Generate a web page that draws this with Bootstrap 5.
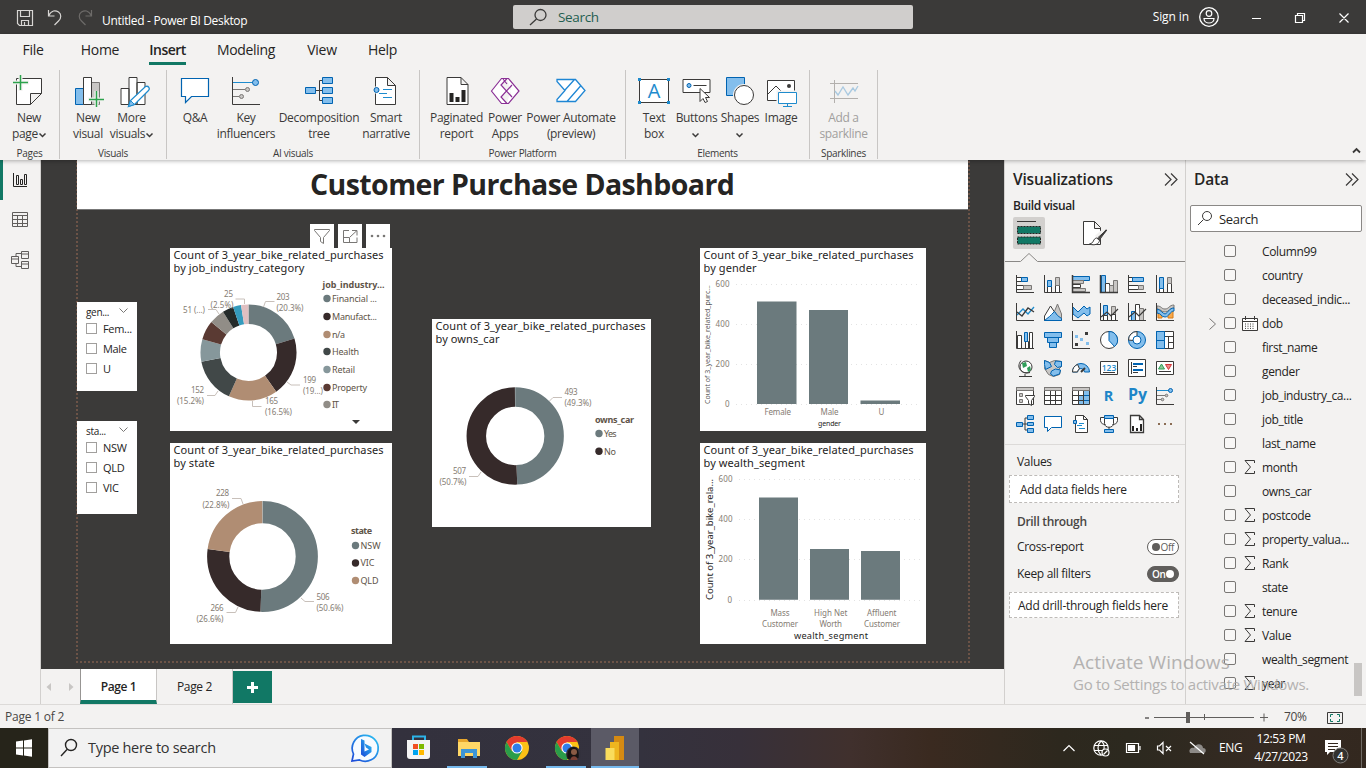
<!DOCTYPE html>
<html lang="en">
<head>
<meta charset="utf-8">
<meta name="viewport" content="width=device-width, initial-scale=1">
<title>Untitled - Power BI Desktop</title>
<link href="https://cdn.jsdelivr.net/npm/bootstrap@5.3.0/dist/css/bootstrap.min.css" rel="stylesheet">
<style>
:root{--ink:#252423;--chrome:#f3f2f1;--dark:#3b3a39;--green:#117865}
body{width:1366px;height:768px;overflow:hidden;font-family:"Open Sans","Noto Sans",sans-serif;font-size:12px;line-height:16px;letter-spacing:-.32px;color:var(--ink);background:var(--chrome)}
svg{display:block;flex:none;overflow:visible}
svg text{letter-spacing:0}
.titlebar{height:34px;background:var(--dark);color:#fff}
.app-search{width:400px;height:24px;background:#d0cecc;border-radius:2px;color:#1f5e50;font-size:13.5px;margin-left:264px}
.ribbon{height:126px;box-shadow:0 1px 4px rgba(0,0,0,.3);z-index:3}
.ribbon-tabs{height:36px;font-size:14px}
.ribbon-tabs a{color:var(--ink);text-decoration:none;height:31px;line-height:31px;text-align:center}
.ribbon-tabs a.on{font-weight:600;border-bottom:3px solid var(--green);letter-spacing:-.55px}
.rgroup{height:89px;border-right:1px solid #c8c6c4}
.ritem{text-align:center;color:#3b3a39;padding-top:5px;white-space:nowrap}
.ritem>svg{margin:0 auto 3px}
.ritem .cv{display:inline-block;overflow:visible;margin:0 0 -1px 1px}
.rlabel{font-size:10px;line-height:12px;text-align:center;color:#3b3a39}
.rail{width:41px;border-right:1px solid #d2d0ce}
.rail>div{height:40px}
.rail .on{border-left:3px solid var(--green);padding-right:3px}
.stage{height:509px;background:var(--dark);overflow:hidden}
.visual{position:absolute;background:#fff;overflow:hidden}
.vtitle{font-family:"Noto Sans",sans-serif;font-size:11px;line-height:13px;height:28px;padding:0 0 0 3.500px;letter-spacing:.09px;white-space:nowrap;color:#252423}
.sheet-guide{position:absolute;left:35px;top:-4px;width:894px;height:507px;border:2px dotted #6c5347}
.banner{position:absolute;left:36px;top:0;width:891px;height:50px;background:#fff;font-weight:700;font-size:28.500px;line-height:48px;letter-spacing:-.58px;padding-left:233px;border-bottom:1px solid #777}
.slicer{width:60px;padding:2px 0 0 9px}
.slicer .hd{height:15px;line-height:16px;font-size:10px;padding-right:9px}
.slicer .opt{height:20px;gap:6px;font-size:11px}
.slicer .bx{width:11px;height:11px;border:1px solid #a19f9d;margin-top:-1px}
.vbtn{width:24px;height:24px;background:#fff}
.sheets{height:35px}
.sheets .tab{width:76px;line-height:35px;text-align:center;border-right:1px solid #c8c6c4}
.sheets .on{background:#fff;border-left:1px solid #979593;border-bottom:4px solid var(--green)}
.sheets .add{width:39px;height:32px;margin-top:2px;background:var(--green)}
.pane{width:181px;border-left:1px solid #d2d0ce}
.pane h2{font-size:15.500px;font-weight:600;line-height:22px;margin:-1px 0 1px;letter-spacing:-.2px}
.viz-grid{display:grid;grid-template-columns:repeat(6,28px);grid-auto-rows:28px;place-items:center;margin:9px 0 0 6px}
.well{background:#fff;border:1px dashed #bebbb8;width:170px;margin-left:4px}
.tgl{width:32px;height:16px;border:1px solid #605e5c;border-radius:8px;font-size:10px;background:#fff;color:#605e5c;padding:0 4px;margin-right:6px}
.tgl i{width:8px;height:8px;border-radius:4px;background:#605e5c}
.tgl.yes{background:#605e5c;color:#fff;font-weight:600}.tgl.yes i{background:#fff}
.data-search{width:172px;height:27px;border:1px solid #8a8886;border-radius:2px;background:#fff;font-size:13px;margin:14px 0 0 4px}
.field{height:24px;padding-left:23px;letter-spacing:-.36px}
.field .ex{width:15px}.field .bx{width:12px;height:12px;border:1px solid #797775;border-radius:2px;background:#f8f7f6;margin-top:-2px}
.field .ty{width:26px;padding-left:7px}
.thumb{position:absolute;left:1354px;top:663px;width:8px;height:33px;background:#c8c6c4}
.status{height:24px;border-top:1px solid #dcdad8;color:#484644}
.taskbar{height:40px;color:#fff;background:linear-gradient(90deg,#26241a 0,#26241a 48px,#33313d 392px,#34323e 640px,#37303a 740px,#40302d 850px,#3a2a20 930px,#2d281e 1060px,#2c291f 1130px,#352a22 1260px,#33281f 100%)}
.tb-search{width:344px;height:40px;background:#f2f2f2;border:1px solid #c4c2c0;color:#333;font-size:14.500px;letter-spacing:-.3px;margin-right:1px}
.app{width:49.500px;height:40px}
.app.run{background:linear-gradient(#76b9ed,#76b9ed) center bottom/40px 2px no-repeat}
.app.cur{width:48px;background:linear-gradient(#76b9ed,#76b9ed) center bottom/100% 2px no-repeat #5b5a66}
.watermark{position:absolute;left:1073px;top:650px;color:#a9a7a6;opacity:.85;font-size:15px;line-height:21px;z-index:5;letter-spacing:-.28px;white-space:nowrap}
.watermark div:first-child{font-size:19px;line-height:24px;letter-spacing:.05px}
.k{fill:#fff;stroke:#3b3a39}.n{fill:none;stroke:#3b3a39}.b{fill:#83beec;stroke:#0063b1}.g{fill:#c8c6c4;stroke:#797775}
.bl{fill:none;stroke:#1e8bcd}.gl{fill:none;stroke:#797775}
.lb{font:8px "Noto Sans",sans-serif;fill:#857c73}.lg{font:9px "Noto Sans",sans-serif;fill:#605448}
.lead-line{fill:none;stroke:#c8c0ba}
.donut circle{fill:none}
.gridl{stroke:#e3e3e3;stroke-dasharray:1 4}
.axt{font:7.500px "Noto Sans",sans-serif;fill:#252423}
</style>
</head>
<body class="d-flex flex-column position-relative">

<header class="titlebar d-flex align-items-center flex-shrink-0">
  <svg width="102" height="34" fill="none" stroke="#d8d6d4" stroke-width="1.2"><path d="M17.500 10.500h15v15h-13l-2-2zM20.500 10.500v6h9v-6M21.500 25.500v-5h7v5M24.500 25v-3"/><path d="M48.500 10v6h6M48.500 16c3-6 7-6 10-4s3 6 0 9l-4 4"/><path stroke="#6d6b69" d="M91.500 10v6h-6M91.500 16c-3-6-7-6-10-4s-3 6 0 9l4 4"/></svg>
  <span class="text-nowrap pt-2" style="width:147px">Untitled - Power BI Desktop</span>
  <div class="app-search d-flex align-items-center">
    <svg width="45" height="24" fill="none" stroke="#3b3a39" stroke-width="1.3"><circle cx="27.500" cy="10" r="5.500"/><path d="M23.500 14L17 20"/></svg><span>Search</span>
  </div>
  <span class="ms-auto" style="padding-right:9px;letter-spacing:-.1px">Sign in</span>
  <svg width="168" height="34" fill="none" stroke="#fff"><circle cx="11" cy="17" r="9.300" stroke-width="1.300"/><circle cx="11" cy="13.500" r="2.800" stroke-width="1.200"/><path d="M6 18.500h10c0 6-10 6-10 0z" stroke-width="1.200"/><path d="M54 18.500h9M97.500 15.500h7v7h-7zM99.500 15.500v-2h7v7h-2M141.500 13.500l9 9M150.500 13.500l-9 9" stroke-width="1.200"/></svg>
</header>

<section class="ribbon flex-shrink-0 position-relative">
  <nav class="ribbon-tabs d-flex">
    <a href="#" style="width:66px">File</a><a href="#" style="width:68px">Home</a><a href="#" class="on" style="width:37px;margin-left:15px">Insert</a><a href="#" style="width:90px;margin-left:15px">Modeling</a><a href="#" style="width:62px">View</a><a href="#" style="width:59px">Help</a>
  </nav>
  <div class="d-flex">
    <div class="rgroup d-flex flex-column justify-content-between" style="width:60px">
      <div class="d-flex"><div class="ritem" style="width:58px"><svg width="32" height="32" viewBox="13 75 32 32"><path class="k" d="M16.500 78.500h25v15l-11 11h-14zM41.500 93.500h-11v11"/><path stroke="#f3f2f1" stroke-width="4" d="M20.500 75v16M13 82.500h16"/><path stroke="#2ca24c" stroke-width="1.500" d="M20.500 75v15M13 82.500h15"/></svg>New<br>page<svg class="cv" width="7" height="5"><path class="n" stroke-width="1.500" d="M.5.500l3 3 3-3"/></svg></div></div>
      <div class="rlabel">Pages</div>
    </div>
    <div class="rgroup d-flex flex-column justify-content-between" style="width:107px">
      <div class="d-flex" style="padding-left:7px"><div class="ritem" style="width:42px"><svg width="32" height="32" viewBox="72 75 32 32"><path class="b" d="M75.500 88.500h8v16h-8z"/><path class="g" d="M91.500 82.500h8v22h-8z"/><path class="k" d="M83.500 77.500h8v27h-8z"/><path stroke="#f3f2f1" stroke-width="4" d="M96.500 91v16M88 99.500h16"/><path stroke="#2ca24c" stroke-width="1.500" d="M96.500 91v16M89 99.500h15"/></svg>New<br>visual</div><div class="ritem" style="width:45px"><svg width="32" height="32" viewBox="115.500 75 32 32"><path class="k" d="M120.500 88.500h8v16h-8zM136.500 82.500h8v22h-8zM128.500 77.500h8v27h-8z"/><path d="M128 106.500l2-6 15-14c3-1 5 2 3 4l-14 14z" fill="#fff" stroke="#1e8bcd" stroke-width="1.300"/><path fill="#83beec" stroke="#1e8bcd" d="M128 106.500l2-6 4 4z"/></svg>More<br>visuals<svg class="cv" width="7" height="5"><path class="n" stroke-width="1.500" d="M.5.500l3 3 3-3"/></svg></div></div>
      <div class="rlabel">Visuals</div>
    </div>
    <div class="rgroup d-flex flex-column justify-content-between" style="width:253px">
      <div class="d-flex" style="padding-left:7px"><div class="ritem" style="width:42px"><svg width="32" height="32" viewBox="179 75 32 32"><path fill="#fff" stroke="#0063b1" stroke-width="1.200" d="M181.500 78.500h27v18h-17l-6 6v-6h-4z"/></svg>Q&amp;A</div><div class="ritem" style="width:60px"><svg width="32" height="32" viewBox="230 75 32 32"><path class="n" d="M232.500 77v27.500h27.500"/><path class="bl" d="M233 82.500h20"/><path class="gl" d="M233 89.500h12M233 96.500h6"/><circle class="b" cx="255.500" cy="82.500" r="3"/><circle class="g" cx="247.500" cy="89.500" r="2"/><circle class="g" cx="241.500" cy="96.500" r="2"/></svg>Key<br>influencers</div><div class="ritem" style="width:86px"><svg width="32" height="32" viewBox="303 75 32 32"><path class="n" d="M315 90.500h8M323 80.500h-3.500v20h3.500"/><path class="b" d="M305.500 87.500h10v6h-10zM322.500 77.500h10v6h-10zM322.500 87.500h10v6h-10zM322.500 97.500h10v6h-10z"/></svg>Decomposition<br>tree</div><div class="ritem" style="width:48px"><svg width="32" height="32" viewBox="370 75 32 32"><path class="k" d="M375.500 77.500h12l8 8v19h-20zM387.500 77.500v8h8"/><path stroke="#f3f2f1" stroke-width="7" d="M374 90h3"/><circle class="b" cx="376.500" cy="90" r="2.500"/><path class="bl" d="M383 89.500h9M379 93.500h8M383 97.500h9"/></svg>Smart<br>narrative</div></div>
      <div class="rlabel">AI visuals</div>
    </div>
    <div class="rgroup d-flex flex-column justify-content-between" style="width:206px">
      <div class="d-flex" style="padding-left:9px"><div class="ritem" style="width:55px"><svg width="32" height="32" viewBox="440.500 75 32 32"><path class="k" d="M446.500 77.500h14l7 7v20h-21zM460.500 77.500v7h7"/><path fill="#252423" d="M449 93h4v9h-4zM455 97h4v5h-4zM461 90h4v12h-4z"/></svg>Paginated<br>report</div><div class="ritem" style="width:42px"><svg width="32" height="32" viewBox="489 75 32 32"><path fill="#fff" stroke="#8a2f95" stroke-width="1.200" d="M491.500 91l10-12.500h7l10.500 12.500-10.500 12.500h-7zM507 78.500l-6 6.500 11 12M512 85l-11 12 6 6.500M503 79l4 5"/></svg>Power<br>Apps</div><div class="ritem" style="width:90px"><svg width="32" height="32" viewBox="555 75 32 32"><path fill="#fff" stroke="#1e86d4" stroke-width="1.300" d="M557 79.500h18.500l9.500 11-9.500 11h-18.500v-2l8-9-8-9zM565 90l9.500-10.500M567 101.500l14-16"/></svg>Power Automate<br>(preview)</div></div>
      <div class="rlabel">Power Platform</div>
    </div>
    <div class="rgroup d-flex flex-column justify-content-between" style="width:184px">
      <div class="d-flex" style="padding-left:7px"><div class="ritem" style="width:42px"><svg width="32" height="32" viewBox="638 75 32 32"><path class="k" d="M639.500 79.500h29v23h-29z"/><path fill="#1e8bcd" d="M638 78h3v3h-3zM667 78h3v3h-3zM638 101h3v3h-3zM667 101h3v3h-3z"/><text x="654" y="98" text-anchor="middle" font-size="20" fill="#1e8bcd">A</text></svg>Text<br>box</div><div class="ritem" style="width:43px"><svg width="32" height="32" viewBox="680.500 75 32 32"><path class="k" d="M682.500 79.500h27v13h-27z"/><circle class="b" cx="688.500" cy="85.500" r="2"/><path class="n" d="M693 85.500h13"/><path class="k" d="M699.500 88.500v13l3-3 2 4 2.500-1-2-4h4z"/></svg>Buttons<br><svg class="cv" style="margin-left:-2px" width="7" height="5"><path class="n" stroke-width="1.500" d="M.5.500l3 3 3-3"/></svg></div><div class="ritem" style="width:44px"><svg width="32" height="32" viewBox="724 75 32 32"><path class="b" d="M726.500 77.500h18v18h-18z"/><circle cx="744" cy="95" r="11" fill="#f3f2f1"/><circle class="k" cx="744" cy="95" r="9.500"/></svg>Shapes<br><svg class="cv" style="margin-left:-2px" width="7" height="5"><path class="n" stroke-width="1.500" d="M.5.500l3 3 3-3"/></svg></div><div class="ritem" style="width:38px"><svg width="32" height="32" viewBox="765 75 32 32"><path class="k" d="M767.500 80.500h27v20h-27z"/><path class="n" d="M768 94l8-8 7 7"/><circle cx="789" cy="86" r="2" fill="#3b3a39"/><path fill="#fff" stroke="#f3f2f1" stroke-width="4" d="M778.500 92.500h18v11h-18z"/><path fill="#fff" stroke="#1e8bcd" d="M778.500 92.500h18v11h-18zM787.500 104v2.500M783 106.500h9"/></svg>Image</div></div>
      <div class="rlabel">Elements</div>
    </div>
    <div class="rgroup d-flex flex-column justify-content-between" style="width:68px">
      <div class="d-flex justify-content-center"><div class="ritem" style="width:50px;color:#a19f9d"><svg width="32" height="32" viewBox="827 75 32 32" fill="none" stroke="#b3b0ad"><path d="M829 83.500h28M829 98.500h28M833.500 80v23"/><path stroke="#a9c9e0" stroke-width="1.300" d="M834 91l3 4 5-8 5 8 5-7 2 3 3-5"/></svg>Add a<br>sparkline</div></div>
      <div class="rlabel">Sparklines</div>
    </div>
    <svg class="ms-auto me-1 mt-auto" style="margin-bottom:5px" width="11" height="7"><path class="n" stroke-width="1.800" d="M2 5.500l3.500-3.500 3.500 3.500"/></svg>
  </div>
</section>

<main class="d-flex flex-shrink-0" style="height:544px">
  <aside class="rail flex-shrink-0">
    <div class="on d-flex align-items-center justify-content-center"><svg width="14" height="14" fill="none" stroke="#252423"><path d="M.5 0v13.500h13.500M3.500 11.500v-9h2v9zM7.500 11.500v-5h2v5zM11.500 11.500v-10h2v10z"/></svg></div>
    <div class="d-flex align-items-center justify-content-center"><svg width="16" height="16" fill="none" stroke="#605e5c"><path d="M.5.500h15v14h-15zM0 3.500h16M0 7.500h16M0 11.500h16M5.500 3v12M10.500 3v12"/></svg></div>
    <div class="d-flex align-items-center justify-content-center"><svg width="18" height="18" fill="none" stroke="#605e5c"><path d="M.5 5.500h7v7h-7zM.5 8h7M10.500.500h7v7h-7zM10.500 3h7M10.500 10.500h7v7h-7zM10.500 13h7M5 5.500v-3h5.500M5 12.500v3h5.500"/></svg></div>
  </aside>

  <div class="d-flex flex-column flex-grow-1">
    <div class="stage position-relative">
      <div class="sheet-guide"></div>
      <div class="banner">Customer Purchase Dashboard</div>

      <div class="position-absolute d-flex" style="left:269px;top:64px;gap:4px">
        <div class="vbtn"><svg width="24" height="24" fill="none" stroke="#797775"><path d="M4.500 5.500h15v1l-6 7v6l-3-2v-4l-6-7z"/></svg></div>
        <div class="vbtn"><svg width="24" height="24" fill="none" stroke="#797775"><path d="M11 6.500h-5.500v12h13.500v-5M5.500 13.500h6v5M12 13l7-6.500M14 6.500h5v5"/></svg></div>
        <div class="vbtn"><svg width="24" height="24" fill="#797775"><circle cx="6" cy="12" r="1.300"/><circle cx="12" cy="12" r="1.300"/><circle cx="18" cy="12" r="1.300"/></svg></div>
      </div>

      <section class="visual" style="left:129px;top:88px;width:221.500px;height:183px">
        <div class="vtitle">Count of 3_year_bike_related_purchases<br>by job_industry_category</div>
        <svg width="221" height="155" viewBox="170 276 221 155">
          <g class="donut" transform="rotate(-90 248.500 352.500)" stroke-width="19.500">
            <circle cx="248.500" cy="352.500" r="38.300" pathLength="1000" stroke="#6b7a7d" stroke-dasharray="203 2000"/>
            <circle cx="248.500" cy="352.500" r="38.300" pathLength="1000" stroke="#362a2a" stroke-dasharray="199 2000" stroke-dashoffset="-203"/>
            <circle cx="248.500" cy="352.500" r="38.300" pathLength="1000" stroke="#b08d73" stroke-dasharray="165 2000" stroke-dashoffset="-402"/>
            <circle cx="248.500" cy="352.500" r="38.300" pathLength="1000" stroke="#414848" stroke-dasharray="152 2000" stroke-dashoffset="-567"/>
            <circle cx="248.500" cy="352.500" r="38.300" pathLength="1000" stroke="#86979b" stroke-dasharray="76 2000" stroke-dashoffset="-719"/>
            <circle cx="248.500" cy="352.500" r="38.300" pathLength="1000" stroke="#5a3a33" stroke-dasharray="64 2000" stroke-dashoffset="-795"/>
            <circle cx="248.500" cy="352.500" r="38.300" pathLength="1000" stroke="#918d87" stroke-dasharray="52 2000" stroke-dashoffset="-859"/>
            <circle cx="248.500" cy="352.500" r="38.300" pathLength="1000" stroke="#242a29" stroke-dasharray="37 2000" stroke-dashoffset="-911"/>
            <circle cx="248.500" cy="352.500" r="38.300" pathLength="1000" stroke="#349bbd" stroke-dasharray="27 2000" stroke-dashoffset="-948"/>
            <circle cx="248.500" cy="352.500" r="38.300" pathLength="1000" stroke="#dfbfc1" stroke-dasharray="24.500 2000" stroke-dashoffset="-975"/>
          </g>
          <path class="lead-line" d="M263.500 307l2-5.500h9M244.500 304v-5h-9M219 314l-3-4.500h-8M287 382l4 3h9M252.500 401v5.500h9M218 391l-3 4.500h-8"/>
          <g class="lb"><text x="276.500" y="300" textLength="13">203</text><text x="276.500" y="311" textLength="27">(20.3%)</text><text x="224" y="297" textLength="9">25</text><text x="210.500" y="308" textLength="23">(2.5%)</text><text x="183" y="313" textLength="22">51 (...)</text><text x="303" y="383" textLength="13">199</text><text x="303" y="394" textLength="20">(19...)</text><text x="265" y="404" textLength="13">165</text><text x="265" y="415" textLength="27">(16.5%)</text><text x="191" y="393" textLength="13">152</text><text x="177" y="404" textLength="27">(15.2%)</text></g>
          <text class="lg" style="font-weight:700" x="322.500" y="288" textLength="62">job_industry...</text>
          <g class="lg"><text x="332" y="302" textLength="45">Financial ...</text><text x="332" y="320" textLength="45">Manufact...</text><text x="332" y="338" textLength="13">n/a</text><text x="332" y="355" textLength="27">Health</text><text x="332" y="373" textLength="23">Retail</text><text x="332" y="391" textLength="35">Property</text><text x="332" y="408" textLength="7">IT</text></g>
          <circle cx="327" cy="298.500" r="3.700" fill="#6b7a7d"/><circle cx="327" cy="316.500" r="3.700" fill="#362a2a"/><circle cx="327" cy="334.500" r="3.700" fill="#b08d73"/><circle cx="327" cy="351.500" r="3.700" fill="#414848"/><circle cx="327" cy="369.500" r="3.700" fill="#86979b"/><circle cx="327" cy="387.500" r="3.700" fill="#5a3a33"/><circle cx="327" cy="404.500" r="3.700" fill="#918d87"/>
          <path d="M352 420h8l-4 4z" fill="#3b3a39"/>
        </svg>
      </section>

      <section class="visual" style="left:129px;top:283px;width:221.500px;height:201px">
        <div class="vtitle">Count of 3_year_bike_related_purchases<br>by state</div>
        <svg width="221" height="173" viewBox="170 471 221 173">
          <g class="donut" transform="rotate(-90 262.500 556.500)" stroke-width="22.200">
            <circle cx="262.500" cy="556.500" r="44.300" pathLength="1000" stroke="#6b7a7d" stroke-dasharray="506 2000"/>
            <circle cx="262.500" cy="556.500" r="44.300" pathLength="1000" stroke="#362a2a" stroke-dasharray="266 2000" stroke-dashoffset="-506"/>
            <circle cx="262.500" cy="556.500" r="44.300" pathLength="1000" stroke="#b08d73" stroke-dasharray="227 2000" stroke-dashoffset="-772"/>
          </g>
          <path class="lead-line" d="M243 504l-2-5.500h-9M301 598l4 3.500h9M238 607l-2.500 5.500h-9"/>
          <g class="lb"><text x="216" y="496" textLength="13">228</text><text x="202.500" y="508" textLength="27">(22.8%)</text><text x="316.500" y="600" textLength="13">506</text><text x="316.500" y="611" textLength="27">(50.6%)</text><text x="210.500" y="611" textLength="13">266</text><text x="196.500" y="622" textLength="27">(26.6%)</text></g>
          <text class="lg" style="font-weight:700" x="351" y="534" textLength="21">state</text>
          <g class="lg"><text x="360.500" y="549" textLength="20">NSW</text><text x="360.500" y="566" textLength="14">VIC</text><text x="360.500" y="584" textLength="18">QLD</text></g>
          <circle cx="355.500" cy="545.500" r="3.700" fill="#6b7a7d"/><circle cx="355.500" cy="563" r="3.700" fill="#362a2a"/><circle cx="355.500" cy="580.500" r="3.700" fill="#b08d73"/>
        </svg>
      </section>

      <section class="visual" style="left:391px;top:159px;width:219px;height:208px">
        <div class="vtitle">Count of 3_year_bike_related_purchases<br>by owns_car</div>
        <svg width="219" height="180" viewBox="432 347 219 180">
          <g class="donut" transform="rotate(-90 515.200 436)" stroke-width="19.500">
            <circle cx="515.200" cy="436" r="38.900" pathLength="1000" stroke="#6b7a7d" stroke-dasharray="493 2000"/>
            <circle cx="515.200" cy="436" r="38.900" pathLength="1000" stroke="#362a2a" stroke-dasharray="506 2000" stroke-dashoffset="-493"/>
          </g>
          <path class="lead-line" d="M549.500 401l3.500-3.500h9M481 472l-3 4.500h-9"/>
          <g class="lb"><text x="564.500" y="395" textLength="13">493</text><text x="564.500" y="406" textLength="27">(49.3%)</text><text x="453" y="474" textLength="13">507</text><text x="439.500" y="485" textLength="27">(50.7%)</text></g>
          <text class="lg" style="font-weight:700" x="595" y="423" textLength="39">owns_car</text>
          <g class="lg"><text x="604" y="437" textLength="12.500">Yes</text><text x="604" y="455" textLength="12">No</text></g>
          <circle cx="599" cy="433.500" r="3.700" fill="#6b7a7d"/><circle cx="599" cy="451.300" r="3.700" fill="#362a2a"/>
        </svg>
      </section>

      <section class="visual" style="left:659px;top:88px;width:226px;height:183px">
        <div class="vtitle">Count of 3_year_bike_related_purchases<br>by gender</div>
        <svg width="226" height="155" viewBox="700 276 226 155">
          <path class="gridl" d="M736 284.500h185M736 324.500h185M736 364.500h185M736 404.500h185"/>
          <path fill="#6b7a7d" d="M757 301.500h39.500v102.500h-39.500zM809 310h39v94h-39zM860.500 400.500h39.500v3.500h-39.500z"/>
          <g class="lb"><text x="715.500" y="287" textLength="14">600</text><text x="715.500" y="327" textLength="14">400</text><text x="715.500" y="367" textLength="14">200</text><text x="725" y="407">0</text><text x="764.500" y="415" textLength="26.500">Female</text><text x="820.500" y="415" textLength="18">Male</text><text x="878.500" y="415">U</text></g>
          <text class="axt" style="font-size:7px" x="818" y="426" textLength="23">gender</text>
          <text class="axt" style="font-size:7px" fill-opacity=".8" transform="translate(710 404) rotate(-90)" textLength="119">Count of 3_year_bike_related_purc...</text>
        </svg>
      </section>

      <section class="visual" style="left:659px;top:283px;width:226px;height:201px">
        <div class="vtitle">Count of 3_year_bike_related_purchases<br>by wealth_segment</div>
        <svg width="226" height="173" viewBox="700 471 226 173">
          <path class="gridl" d="M739 479.500h182M739 519.500h182M739 559.500h182M739 600.500h182"/>
          <path fill="#6b7a7d" d="M759 497.500h39v102.300h-39zM810 549h39v50.800h-39zM861 551h39v48.800h-39z"/>
          <g class="lb"><text x="718.500" y="482" textLength="14">600</text><text x="718.500" y="522" textLength="14">400</text><text x="718.500" y="562" textLength="14">200</text><text x="727.500" y="603">0</text><text x="770.500" y="616" textLength="19">Mass</text><text x="762" y="627" textLength="36">Customer</text><text x="814" y="616" textLength="33.500">High Net</text><text x="819.500" y="627" textLength="22.500">Worth</text><text x="867" y="616" textLength="29.500">Affluent</text><text x="864" y="627" textLength="36">Customer</text></g>
          <text class="axt" style="font-size:9.200px" x="794" y="639" textLength="74">wealth_segment</text>
          <text class="axt" style="font-size:9.500px" transform="translate(713 600) rotate(-90)" textLength="121">Count of 3_year_bike_rela...</text>
        </svg>
      </section>

      <section class="visual slicer" style="left:36px;top:142px;height:89px">
        <div class="hd d-flex justify-content-between align-items-center">gen...<svg width="9" height="5" style="margin-top:-3px"><path class="gl" d="M.5.500l4 4 4-4"/></svg></div>
        <div class="opt d-flex align-items-center"><i class="bx"></i>Fem...</div><div class="opt d-flex align-items-center"><i class="bx"></i>Male</div><div class="opt d-flex align-items-center"><i class="bx"></i>U</div>
      </section>
      <section class="visual slicer" style="left:36px;top:261px;height:93px">
        <div class="hd d-flex justify-content-between align-items-center">sta...<svg width="9" height="5" style="margin-top:-3px"><path class="gl" d="M.5.500l4 4 4-4"/></svg></div>
        <div class="opt d-flex align-items-center"><i class="bx"></i>NSW</div><div class="opt d-flex align-items-center"><i class="bx"></i>QLD</div><div class="opt d-flex align-items-center"><i class="bx"></i>VIC</div>
      </section>
    </div>

    <div class="sheets d-flex">
      <svg width="39" height="35" fill="#c8c6c4"><path d="M10 14v8l-4.500-4zM28 14v8l4.500-4z"/></svg>
      <div class="tab on fw-semibold" style="width:77px;letter-spacing:-.4px">Page 1</div><div class="tab">Page 2</div>
      <div class="add"><svg width="39" height="32"><path stroke="#fff" stroke-width="3" d="M14 16.500h11M19.500 11v11"/></svg></div>
    </div>
  </div>

  <aside class="pane flex-shrink-0">
    <div class="d-flex justify-content-between align-items-center" style="padding:9px 8px 0 8px"><h2>Visualizations</h2><svg width="13" height="13" style="margin-top:-2px"><path class="n" stroke-width="1.200" d="M1 .5l6 6-6 6M7 .5l6 6-6 6"/></svg></div>
    <div class="fw-semibold" style="padding:7px 0 0 8px;letter-spacing:-.38px">Build visual</div>
    <svg width="180" height="58" viewBox="1005 214 180 58"><rect x="1013" y="217" width="32" height="32" rx="2" fill="#d2d0ce"/><path class="n" d="M1017 221.500h19"/><path d="M1017.500 226.500h23v7h-23zM1017.500 237h23v7h-23z" fill="#117865" stroke="#252423" stroke-dasharray="2 1"/><path class="k" d="M1083.500 221.500h11l6 6v17h-17zM1094.500 221.500v7h6"/><path d="M1107 229l-10 9" stroke="#f3f2f1" stroke-width="6"/><path class="k" d="M1106.500 230l-9 8 2 2zM1096.500 238c-4 1-2 5-7 6 5 2 10 0 10-4z"/><path class="n" stroke-width="1.600" d="M1106.500 230l-8 9"/><path fill="none" stroke="#8a8886" d="M1005 261.500h15.500l8.500-8 8.500 8h147.500"/></svg>

    <div class="viz-grid" style="margin-top:-2px">
      <svg width="18" height="18"><path class="k" d="M.5 2.500h6v4h-6zM.5 10.500h8v4h-8z"/><path class="b" d="M5.500 2.500h6v4h-6z"/><path class="g" d="M7.500 10.500h8v4h-8z"/><path class="n" d="M.5 0v17.500h17.500"/></svg>
      <svg width="18" height="18"><path class="k" d="M3.500 11.500h4v6h-4zM11.500 9.500h4v8h-4z"/><path class="b" d="M3.500 5.500h4v6h-4z"/><path class="g" d="M11.500 2.500h4v8h-4z"/><path class="n" d="M.5 0v17.500h17.500"/></svg>
      <svg width="18" height="18"><path class="b" d="M.5 1.500h17v4h-17z"/><path class="g" d="M.5 5.500h11v3h-11zM.5 13.500h13v3h-13z"/><path class="k" d="M.5 9.500h8v3h-8z"/><path class="n" stroke-width="1.500" d="M.5 0v17.500h17.500"/></svg>
      <svg width="18" height="18"><path class="b" d="M1.500.500h4v17h-4z"/><path class="k" d="M5.500 8.500h4v9h-4z"/><path class="g" d="M9.500 10.500h4v7h-4zM13.500 5.500h4v12h-4z"/><path class="n" stroke-width="1.500" d="M.5 0v17.500h17.500"/></svg>
      <svg width="18" height="18"><path class="k" d="M.5 2.500h5v4h-5zM.5 10.500h10v4h-10z"/><path class="b" d="M4.500 2.500h11v4h-11z"/><path class="g" d="M10.500 10.500h5v4h-5z"/><path class="n" d="M.5 0v17.500h17.500"/></svg>
      <svg width="18" height="18"><path class="k" d="M3.500 12.500h4v5h-4zM11.500 8.500h4v9h-4z"/><path class="b" d="M3.500 2.500h4v11h-4z"/><path class="g" d="M11.500 2.500h4v6h-4z"/><path class="n" d="M.5 0v17.500h17.500"/></svg>

      <svg width="18" height="18"><path class="bl" stroke-width="1.300" d="M1 12l6-6 5 5 6-7"/><path class="n" stroke-width="1.300" d="M1 9l5 4 6-8 6 4"/><path class="n" d="M.5 0v17.500h17.500"/></svg>
      <svg width="18" height="18"><path class="g" d="M8.500 13l5-12 4 10v6.500h-9z"/><path class="k" d="M.5 13l6-10 6 9v5.500h-12z"/><path class="b" d="M.5 17.500l5-4 2-2 3-3 3 4 4 3v2z"/></svg>
      <svg width="18" height="18"><path class="b" d="M1 4l5 5 6-6 3 3 3-2v7l-3 2-3-3-6 5-5-4z"/><path class="n" d="M.5 0v17.500h17.500"/></svg>
      <svg width="18" height="18"><path class="b" d="M3.500 2.500h4v10h-4z"/><path class="g" d="M11.500 3.500h4v10h-4z"/><path class="k" d="M3.500 12.500h4v5h-4zM11.500 11.500h4v6h-4z"/><path class="n" stroke-width="1.200" d="M1 14l6-5 4 4 7-7"/><path class="n" d="M.5 0v17.500h17.500"/></svg>
      <svg width="18" height="18"><path class="b" d="M3.500 8.500h4v9h-4z"/><path class="k" d="M7.500 1.500h4v16h-4z"/><path class="g" d="M11.500 5.500h4v12h-4z"/><path class="n" stroke-width="1.200" d="M1 14l6-5 4 4 7-7"/><path class="n" d="M.5 0v17.500h17.500"/></svg>
      <svg width="18" height="18"><path fill="#f7a94c" stroke="#d87a16" d="M2 8h4v7h-4zM12 8h5v7h-5z"/><path class="g" d="M1 3c5 0 4 3 8 3s4-4 9-4v3c-4 0-5 4-9 4s-4-3-8-3z"/><path class="b" d="M1 6c4 1 5 4 8 5 3-1 4-6 9-6v3c-4 0-5 6-9 6s-4-4-8-4z"/><path class="n" d="M.5 0v17.500h17.500"/></svg>

      <svg width="18" height="18"><path class="k" d="M1.500 4.500h4v13h-4zM9.500 10.500h3v7h-3zM13.500 1.500h3v16h-3z"/><path class="b" d="M8.500 1.500h3v9h-3z"/><path class="n" d="M.5 0v17.500h17.500"/></svg>
      <svg width="18" height="18"><path class="b" d="M.5 1.500h17v5h-17zM3.500 6.500h11v5h-11zM5.500 11.500h7v5h-7z"/></svg>
      <svg width="18" height="18"><path fill="#83beec" d="M3 4h3v3h-3zM8 7h3v3h-3zM14 11h3v3h-3z"/><path fill="#3b3a39" d="M13 1h3v3h-3zM3 12h3v3h-3z"/><path class="n" d="M.5 0v17.500h17.500"/></svg>
      <svg width="18" height="18"><circle class="k" cx="9" cy="9" r="8.500"/><path class="b" d="M9 .5a8.500 8.500 0 0 1 5.500 15l-5.500-6z"/></svg>
      <svg width="18" height="18"><circle class="b" cx="9" cy="9" r="8.500"/><path class="k" d="M.5 9a8.500 8.500 0 0 1 8.500-8.500v5a4 4 0 0 0-4 4z"/><circle cx="9" cy="9" r="4" fill="#fff" stroke="#0063b1"/></svg>
      <svg width="18" height="18"><path class="k" d="M.5.500h17v17h-17zM8.500 5.500h9M12.500 5.500v12M12.500 11.500h5"/><path class="b" d="M.5.500h8v9h-8zM.5 9.500h8v8h-8z"/></svg>

      <svg width="18" height="18"><circle class="k" cx="10" cy="8" r="6"/><path fill="#2f9e58" d="M6 4l4-1 1 4-4 2zM11 9l3-2 1 4-3 2z"/><path class="n" d="M5 1.500c-6 8 2 14 9 12M9 15v2M3 17.500h13"/></svg>
      <svg width="18" height="18"><path class="g" d="M.5 1.500l5 2 5-2 7 1v5l-3 3 2 1-1 4-6 2-5-2-4-6 1-4z"/><path class="b" d="M.5 1.500l5 2 2 4-6 3-1-5zM11.500 2l6 .500v5l-4 1-3-3zM7.500 12l4-2 5 1-1 4-6 2-3-2z"/></svg>
      <svg width="18" height="18"><path class="b" d="M.5 13a8.500 8.500 0 0 1 17 0h-5a3.500 3.500 0 0 0-7 0z"/><path class="k" d="M.5 13a8.500 8.500 0 0 1 5-7.600l2 4.500a3.500 3.500 0 0 0-2 3z"/><path class="n" stroke-width="2" d="M9 13l4-4"/></svg>
      <svg width="18" height="18"><path class="k" d="M.5 2.500h17v13h-17z"/><path class="n" d="M3 13.500h12"/><text x="9" y="11.500" text-anchor="middle" font-size="8.500" font-weight="600" fill="#1e8bcd">123</text></svg>
      <svg width="18" height="18"><path class="k" d="M.5.500h17v17h-17z"/><path class="n" d="M3.500 3v12M5 7.500h4M5 13.500h5"/><path stroke="#0063b1" stroke-width="2" d="M5 5h10M5 11h10"/></svg>
      <svg width="18" height="18"><path class="k" d="M.5 2.500h17v13h-17z"/><path fill="#8bc796" stroke="#2f9e58" d="M2.500 10l3-5 3 5z"/><path fill="#ee8a8a" stroke="#d13438" d="M9.500 5.500h6l-3 5z"/><path class="n" d="M3 12.500h12"/></svg>

      <svg width="18" height="18"><path class="k" d="M.5.500h17v17h-17z"/><path class="g" d="M.5.500h17v3h-17zM3.500 6.500h3v3h-3zM3.500 12.500h3v3h-3z"/><path class="k" d="M9.500 8.500h9v1l-3 4v5l-3-2v-3l-3-4z"/></svg>
      <svg width="18" height="18"><path class="k" d="M.5.500h17v17h-17zM.5 8.500h17M.5 13.500h17M6.500 4v13M11.500 4v13"/><path class="g" d="M.5.500h17v3h-17z"/></svg>
      <svg width="18" height="18"><path class="k" d="M.5.500h17v17h-17z"/><path class="g" d="M.5.500h17v3h-17z"/><path fill="#83beec" d="M12 4h5v13h-5zM6 8h6v5h-6zM6 14h6v3h-6z"/><path class="n" d="M.5 8.500h11M.5 13.500h11M6.500 4v13M11.500 4v13"/><path stroke="#0063b1" d="M12 8.500h5M12 13.500h5"/></svg>
      <svg width="18" height="18"><text x="8.500" y="14" text-anchor="middle" font-size="14.500" font-weight="700" fill="#1e86c8">R</text></svg>
      <svg width="18" height="18"><text x="0" y="13" font-size="16" font-weight="700" fill="#1e86c8" textLength="19">Py</text></svg>
      <svg width="18" height="18"><path class="n" d="M.5 0v17.500h17.500"/><path class="bl" d="M1 3.500h12"/><path class="gl" d="M1 8.500h8M1 12.500h5"/><circle class="b" cx="14.500" cy="3.500" r="2"/><circle class="g" cx="10.500" cy="8.500" r="1.300"/><circle class="g" cx="6.500" cy="12.500" r="1.300"/></svg>

      <svg width="18" height="18"><path class="n" d="M6 9h6M12 3h-3v12h3"/><path class="b" d="M.5 7.500h6v4h-6zM11.500.500h6v4h-6zM11.500 7.500h6v3h-6zM11.500 13.500h6v4h-6z"/></svg>
      <svg width="18" height="18"><path fill="#fff" stroke="#0063b1" d="M.5 1.500h17v11h-10l-4 4v-4h-3z"/></svg>
      <svg width="18" height="18"><path class="k" d="M3.500.500h8l4 4v13h-12zM11.500.500v4h4"/><path class="b" d="M1.500 5.500h3v3h-3z"/><path class="bl" d="M7 8.500h5M5 10.500h5M7 13.500h6"/></svg>
      <svg width="18" height="18"><path class="k" d="M4.500 2.500h-4v3c0 3 3 4 5 4M13.500 2.500h4v3c0 3-3 4-5 4M4.500 1.500h9v7c0 5-9 5-9 0zM9 12v3"/><path class="b" d="M4.500.500h9v3h-9zM4.500 14.500h9v3h-9z"/></svg>
      <svg width="18" height="18"><path class="k" stroke-width="1.300" d="M2.500.500h9l4 4v13h-13zM11.500.500v4h4"/><path fill="#252423" d="M4 11h2v5h-2zM8 13h2v3h-2zM12 9h2v7h-2z"/></svg>
      <svg width="18" height="18" fill="#8a6d55"><path d="M2 8h2v2h-2zM8 8h2v2h-2zM14 8h2v2h-2z"/></svg>
    </div>
    <div style="border-top:1px solid #dcdad8;margin-top:6px;padding:9px 0 0 12px">Values</div>
    <div class="well" style="height:28px;line-height:27px;margin-top:5px;padding-left:10px;letter-spacing:-.27px">Add data fields here</div>
    <div class="fw-semibold" style="padding:11px 0 0 12px;color:#484644">Drill through</div>
    <div class="d-flex justify-content-between align-items-center" style="padding:9px 0 0 12px">Cross-report<span class="tgl d-flex justify-content-between align-items-center"><i></i>Off</span></div>
    <div class="d-flex justify-content-between align-items-center" style="padding:11px 0 0 12px">Keep all filters<span class="tgl yes d-flex justify-content-between align-items-center">On<i></i></span></div>
    <div class="well" style="height:26px;line-height:25px;margin-top:10px;padding-left:8px;letter-spacing:-.26px">Add drill-through fields here</div>
  </aside>

  <aside class="pane flex-shrink-0">
    <div class="d-flex justify-content-between align-items-center" style="padding:9px 8px 0 8px"><h2>Data</h2><svg width="13" height="13" style="margin-top:-2px"><path class="n" stroke-width="1.200" d="M1 .5l6 6-6 6M7 .5l6 6-6 6"/></svg></div>
    <div class="data-search d-flex align-items-center"><svg width="28" height="25"><circle class="n" cx="16" cy="10" r="4.500"/><path class="n" d="M12.500 13.500l-5.500 5.500"/></svg>Search</div>
    <div id="fields" style="padding-top:8px"></div>
  </aside>
</main>

<footer class="status d-flex align-items-center flex-shrink-0">
  <span style="padding-left:5px;letter-spacing:-.22px">Page 1 of 2</span>
  <svg class="ms-auto" width="126" height="22" viewBox="1144 705 126 22"><path stroke="#605e5c" d="M1154 716.500h100M1204.500 713v6M1260 716.500h8M1264 712.500v8"/><path stroke="#605e5c" stroke-width="1.500" d="M1145 717h4"/><path fill="#605e5c" d="M1186 711h4v11h-4z"/></svg>
  <span style="padding-left:14px;width:57px">70%</span>
  <svg width="39" height="22" viewBox="1327 705 39 22"><path class="n" d="M1327.500 711.500h15v11h-15z"/><path fill="none" stroke="#117865" d="M1330.500 716v-2.500h2.500M1337 713.500h2.500v2.500M1339.500 718v2.500h-2.500M1333 720.500h-2.500v-2.500"/></svg>
</footer>

<div class="taskbar d-flex align-items-center flex-shrink-0">
  <svg width="48" height="40"><path fill="#fff" d="M16 13.500l7-1v7h-7zM24 12.400l8-1.200v8.300h-8zM16 20.500h7v7l-7-1zM24 20.500h8v8.300l-8-1.200z"/></svg>
  <div class="tb-search d-flex align-items-center flex-shrink-0">
    <svg width="39" height="38" fill="none" stroke="#252423" stroke-width="1.400"><circle cx="22" cy="16" r="5.500"/><path d="M18 20.500L12 27"/></svg>Type here to search
    <svg class="ms-auto" style="margin-right:10px" width="34" height="38"><defs><linearGradient id="bing" x1="0" y1="1" x2="1" y2="0"><stop stop-color="#1b48d8"/><stop offset="1" stop-color="#2bc3f2"/></linearGradient></defs><path fill="#f7fbff" stroke="url(#bing)" stroke-width="1.700" d="M5 32l1.500-7a13 13 0 1 1 6 6z"/><path fill="url(#bing)" d="M14 10l3.500 1.500v11l4.500-2-3-2-1.500-4 7 3.500v5l-7 5-3.500-2.500z"/></svg>
  </div>
  <div class="app"><svg width="49" height="40" viewBox="393 728 49 40"><path fill="none" stroke="#2cb3e8" stroke-width="2" d="M413 742v-5.500h12v5.500"/><path fill="#f4f4f4" d="M407 740h23v16q0 3-3 3h-17q-3 0-3-3z"/><path fill="#f25022" d="M413 744h5v5h-5z"/><path fill="#7fba00" d="M419 744h5v5h-5z"/><path fill="#00a4ef" d="M413 750h5v5h-5z"/><path fill="#ffb900" d="M419 750h5v5h-5z"/></svg></div>
  <div class="app run"><svg width="49" height="40" viewBox="442 728 49 40"><path fill="#e8a72c" d="M457 739h9l2 3h11v6h-22z"/><path fill="#ffd766" d="M457 742h22v14h-22z"/><path fill="#3d95d6" d="M460 749h16v9h-4v-5h-8v5h-4z"/></svg></div>
  <div class="app"><svg width="49" height="40"><use href="#chrome" x="25" y="20"/></svg></div>
  <div class="app run"><svg width="49" height="40"><use href="#chrome" x="25" y="20"/><circle cx="31.500" cy="26" r="7.500" fill="#33313d"/><path fill="#171313" d="M25.500 31c-1-8 2-12 6-12s6 5 5 11z"/><circle cx="32" cy="24" r="3" fill="#8a5a44"/><path fill="#7b3f34" d="M28.500 32c0-5 7-5 7 0z"/></svg></div>
  <div class="app run cur"><svg width="48" height="40" viewBox="591 728 48 40"><path fill="#d58a12" d="M614 736h10v24h-10z"/><path fill="#eeb51f" d="M610 742h9v18h-9z"/><path fill="#f9dc5c" d="M605.500 748h9v12h-9z"/></svg></div>
  <svg width="0" height="0"><defs><g id="chrome"><circle r="12" fill="#fbc116"/><path fill="#e33b2e" d="M-10.400-6a12 12 0 0 1 20.800 0h-10.400l-5.200 9z"/><path fill="#2a9d4a" d="M-10.400-6a12 12 0 0 0 10.400 18l5.200-9h-10.400z"/><circle r="5.600" fill="#fff"/><circle r="4.500" fill="#2f7de9"/></g></defs></svg>
  <svg class="ms-auto" width="156" height="40" viewBox="1060 728 156 40" fill="none" stroke="#fff" stroke-width="1.200"><path d="M1063.500 751l5.500-5.500 5.500 5.500"/><circle cx="1101" cy="748" r="7.200"/><path d="M1094 745.500h14M1094 750.500h9M1101 741c-4 4-4 10 0 14M1101 741c3 2 3.500 5 3 8"/><circle cx="1105.500" cy="752.500" r="3.500" fill="#2c291f"/><path d="M1103.500 754.500l4-4M1126.500 743.500h12v9h-12zM1140 746v4"/><path fill="#fff" d="M1128.500 745.500h6v5h-6z"/><path d="M1157.500 746v4h2l3.500 3.500v-11l-3.500 3.500zM1166 746l5 5M1171 746l-5 5"/><path fill="#8d8a87" stroke="none" d="M1190 753c-2-4 2-6 4-5 2-6 9-4 9 0 4 0 3 5 1 5z"/><path d="M1190 742l14 12"/></svg>
  <span style="padding-left:3px;width:34px;letter-spacing:-.4px">ENG</span>
  <span class="text-center" style="width:62px;line-height:18px;letter-spacing:-.35px">12:53 PM<br>4/27/2023</span>
  <svg width="54" height="40" viewBox="1312 728 54 40"><path fill="#fff" d="M1325 740h16v12h-11l-3 3v-3h-2z"/><path stroke="#33281f" d="M1328 743.500h10M1328 746.500h10M1328 749.500h7"/><circle cx="1340.500" cy="755.500" r="7.500" fill="#33322f" stroke="#807e7b"/><text x="1340.500" y="759.500" font-size="11" font-weight="600" text-anchor="middle" fill="#fff">4</text><path stroke="#6f6a64" d="M1361.500 728v40"/></svg>
</div>

<div class="thumb"></div>
<div class="watermark"><div>Activate Windows</div><div>Go to Settings to activate Windows.</div></div>

<script>
const fields = [["Column99"],["country"],["deceased_indic..."],["dob","date"],["first_name"],["gender"],["job_industry_ca..."],["job_title"],["last_name"],["month","sum"],["owns_car"],["postcode","sum"],["property_valua...","sum"],["Rank","sum"],["state"],["tenure","sum"],["Value","sum"],["wealth_segment"],["year","sum"]];
const icons = {
  sum: '<svg width="12" height="14" style="margin-left:1px;margin-top:-2px"><path class="n" d="M10.500 3v-2.500h-9.500l5.500 6.500-5.500 6.500h9.500v-2.500"/></svg>',
  date: '<svg width="16" height="15" style="margin-left:-1px;margin-top:-1px"><path class="k" d="M.5 2.500h15v12h-15zM.5 5.500h15M3.500 0v4M12.500 0v4"/><path class="n" stroke-dasharray="1 1.500" d="M3 8h10M3 10.200h10M3 12.400h10"/></svg>'
};
document.getElementById("fields").innerHTML = fields.map(([name, type]) =>
  `<div class="field d-flex align-items-center"><span class="ex">${type === "date" ? '<svg width="7" height="12"><path class="gl" d="M.5.500l6 5.500-6 5.500"/></svg>' : ""}</span><i class="bx"></i><span class="ty">${icons[type] || ""}</span><span>${name}</span></div>`).join("");
</script>
<script src="https://cdn.jsdelivr.net/npm/bootstrap@5.3.0/dist/js/bootstrap.bundle.min.js"></script>
</body>
</html>
